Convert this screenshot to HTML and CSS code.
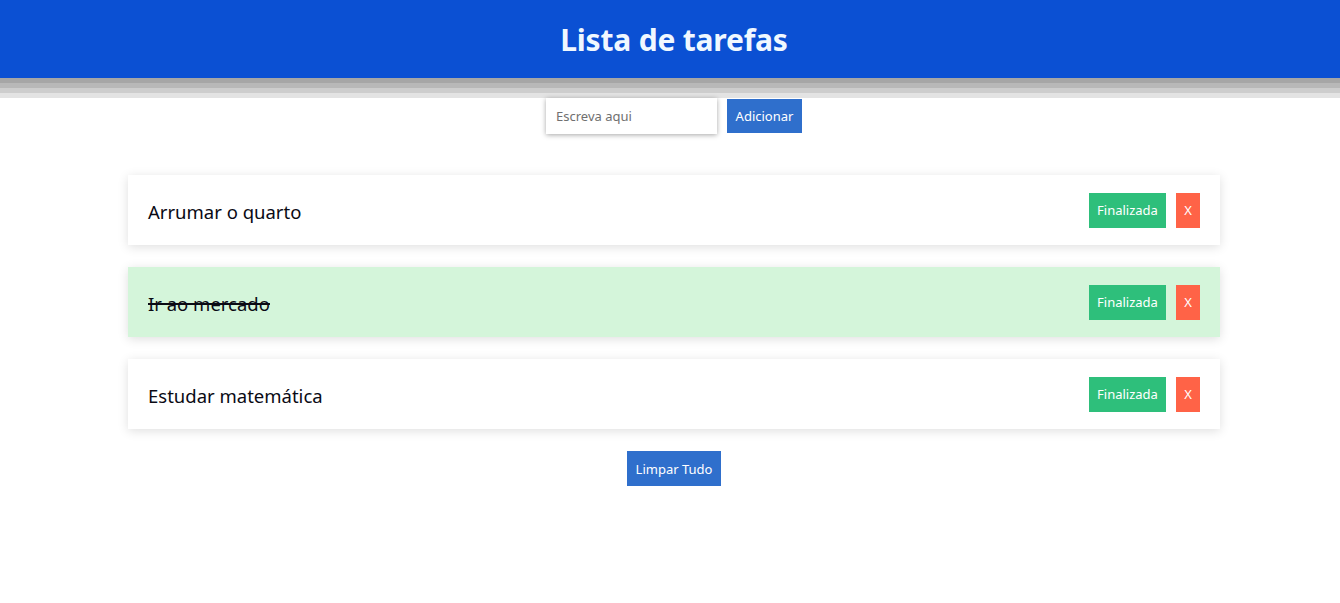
FILE: index.html
```html
<!DOCTYPE html>
<html lang="pt">
<head>
<meta charset="utf-8">
<title>Lista de tarefas</title>
<link rel="stylesheet" href="styles.css">
</head>
<body>
<header class="topbar">
  <h1 class="title">Lista de tarefas</h1>
</header>
<main class="page">
  <form class="add-form">
    <input class="add-input" type="text" placeholder="Escreva aqui">
    <button class="btn btn-blue add-btn" type="button">Adicionar</button>
  </form>
  <ul class="tasks">
    <li class="task">
      <span class="task-text">Arrumar o quarto</span>
      <div class="task-actions">
        <button class="btn btn-green" type="button">Finalizada</button>
        <button class="btn btn-red" type="button">X</button>
      </div>
    </li>
    <li class="task task-done">
      <span class="task-text">Ir ao mercado</span>
      <div class="task-actions">
        <button class="btn btn-green" type="button">Finalizada</button>
        <button class="btn btn-red" type="button">X</button>
      </div>
    </li>
    <li class="task">
      <span class="task-text">Estudar matemática</span>
      <div class="task-actions">
        <button class="btn btn-green" type="button">Finalizada</button>
        <button class="btn btn-red" type="button">X</button>
      </div>
    </li>
  </ul>
  <div class="clear-row">
    <button class="btn btn-blue clear-btn" type="button">Limpar Tudo</button>
  </div>
</main>
</body>
</html>
```
FILE: styles.css
```css
* { box-sizing: border-box; }
html, body { margin: 0; padding: 0; background: #fff; }
body {
  font-family: "Noto Sans", "Open Sans", sans-serif;
  color: #0a0a14;
}
.topbar {
  height: 78px;
  background: #0b50d3;
  display: flex;
  align-items: center;
  justify-content: center;
  padding-left: 8px;
  box-shadow: 0 5px 0 #a6a6a6, 0 10px 0 #b8b8b8, 0 15px 0 #cdcdcd, 0 20px 0 #e3e3e3;
}
.title {
  margin: 0;
  font-size: 30px;
  font-weight: 700;
  color: #f0f8ff;
  letter-spacing: -0.2px;
}
.page {
  padding: 20px 120px 0 128px;
}
.add-form {
  display: flex;
  justify-content: center;
  align-items: center;
  gap: 10px;
  margin: 0 0 0 -120px;
  padding-left: 120px;
}
.add-input {
  width: 171px;
  height: 36px;
  border: none;
  outline: none;
  padding: 0 10px;
  font-family: inherit;
  font-size: 13px;
  box-shadow: 0 1px 5px rgba(0,0,0,0.35);
}
.add-input::placeholder { color: #707070; }
.btn {
  border: none;
  color: #fff;
  font-family: inherit;
  font-size: 13px;
  height: 35px;
  padding: 0 8px;
  cursor: pointer;
}
.btn-blue { background: #2f6fcc; }
.btn-green { background: #2ebf7b; }
.btn-red { background: #ff6347; padding: 0; width: 24px; }
.add-btn { height: 34px; width: 75px; padding: 0; }
.tasks {
  list-style: none;
  margin: 41px 0 0;
  padding: 0;
  display: flex;
  flex-direction: column;
  gap: 22px;
}
.task {
  height: 70px;
  background: #fff;
  display: flex;
  align-items: center;
  justify-content: space-between;
  padding: 0 20px;
  box-shadow: 0 2px 10px rgba(0,0,0,0.13);
}
.task-text { font-size: 18.5px; padding-top: 3px; }
.task-done { background: #d4f5da; }
.task-done .task-text { text-decoration: line-through; text-decoration-thickness: 2px; }
.task-actions { display: flex; gap: 10px; }
.task-actions .btn-green { width: 77px; padding: 0; }
.clear-row {
  display: flex;
  justify-content: center;
  margin: 22px -120px 0 -120px;
}
.clear-btn { width: 94px; padding: 0; }
```
